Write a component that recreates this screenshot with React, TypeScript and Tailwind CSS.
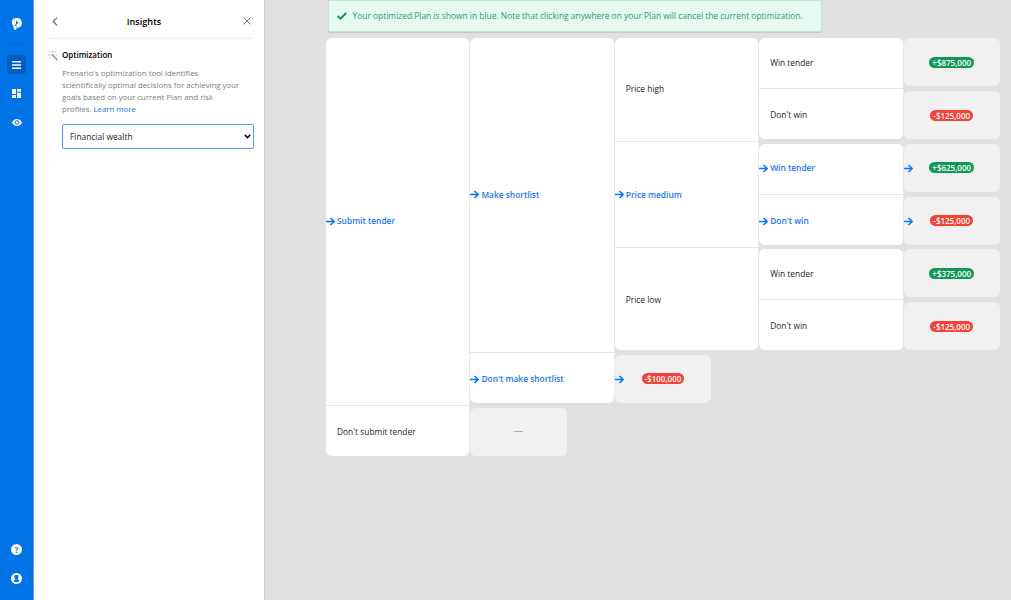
import React from "react";

type Cell = {
  label: string;
  active?: boolean;
  pos: string;
  first?: boolean;
  last?: boolean;
};

const cells: Cell[] = [
  { label: "Submit tender", active: true, pos: "col-start-1 row-start-1 row-span-7", first: true },
  { label: "Don't submit tender", pos: "col-start-1 row-start-8", last: true },
  { label: "Make shortlist", active: true, pos: "col-start-2 row-start-1 row-span-6", first: true },
  { label: "Don't make shortlist", active: true, pos: "col-start-2 row-start-7", last: true },
  { label: "Price high", pos: "col-start-3 row-start-1 row-span-2", first: true },
  { label: "Price medium", active: true, pos: "col-start-3 row-start-3 row-span-2" },
  { label: "Price low", pos: "col-start-3 row-start-5 row-span-2", last: true },
  { label: "Win tender", pos: "col-start-4 row-start-1", first: true },
  { label: "Don't win", pos: "col-start-4 row-start-2", last: true },
  { label: "Win tender", active: true, pos: "col-start-4 row-start-3", first: true },
  { label: "Don't win", active: true, pos: "col-start-4 row-start-4", last: true },
  { label: "Win tender", pos: "col-start-4 row-start-5", first: true },
  { label: "Don't win", pos: "col-start-4 row-start-6", last: true },
];

type Outcome = { value?: string; active?: boolean; pos: string };

const outcomes: Outcome[] = [
  { value: "+$875,000", pos: "col-start-5 row-start-1" },
  { value: "-$125,000", pos: "col-start-5 row-start-2" },
  { value: "+$625,000", active: true, pos: "col-start-5 row-start-3" },
  { value: "-$125,000", active: true, pos: "col-start-5 row-start-4" },
  { value: "+$375,000", pos: "col-start-5 row-start-5" },
  { value: "-$125,000", pos: "col-start-5 row-start-6" },
  { value: "-$100,000", active: true, pos: "col-start-3 row-start-7" },
  { pos: "col-start-2 row-start-8" },
];

function Arrow() {
  return (
    <svg viewBox="0 0 9 9" className="h-[9px] w-[9px] shrink-0" fill="none" stroke="#007bff" strokeWidth="1.6">
      <path d="M0 4.5H7.6M4.5 1 8 4.5 4.5 8" />
    </svg>
  );
}

function PlanCell({ label, active, pos, first, last }: Cell) {
  return (
    <div
      className={`${pos} flex flex-col border-r border-[#e8e8e8] bg-white ${first ? "rounded-t-[6px]" : ""} ${last ? "mb-[4.7px] rounded-b-[6px]" : ""}`}
    >
      <div className={`flex flex-1 items-center pt-[1.4px] ${active ? "font-semibold text-[#1677f5]" : "pl-[11px] text-[#212529]"}`}>
        {active && <span className="mr-[2px] flex"><Arrow /></span>}
        <span>{label}</span>
      </div>
      {!last && <div className="mb-[1.7px] mt-[2px] h-px bg-[#e6e6e6]" />}
    </div>
  );
}

function OutcomeCell({ value, active, pos }: Outcome) {
  return (
    <div className={`${pos} mb-[4.7px] grid w-[96.3px] grid-cols-[9px_1fr_9px] items-center rounded-[6px] bg-[#f1f1f1]`}>
      <div className="pt-px">{active && <Arrow />}</div>
      {value ? (
        <div
          className={`justify-self-center rounded-full px-[3px] text-[8px] leading-[11px] font-semibold text-white ${value.startsWith("+") ? "bg-[#109856]" : "bg-[#f44336]"}`}
        >
          {value}
        </div>
      ) : (
        <div className="h-px w-[9px] justify-self-center bg-[#b0b0b0]" />
      )}
    </div>
  );
}

function Sidebar() {
  return (
    <nav className="flex w-[34px] shrink-0 flex-col items-center border-r border-[#75aee9] bg-[#0073e6]">
      <svg viewBox="0 0 12 14" className="mt-[17px] h-[14px] w-[12px]">
        <path d="M3.8 1.3V12.800C2.800 12.400 2.500 11.300 2.500 9.400 1.200 8 .8 6.400 1 4.500 1.200 2.700 2.100 1.600 3.800 1.300Z" fill="white" />
        <path d="M3.700 1.300C8 .3 10.900 2.500 10.900 5.900 10.900 9 8.600 10.900 5.400 10.600V7.600L7.600 5.800 5 3.600V7.600H3.700Z" fill="white" />
        <path d="M3.700 9H5.400V12.800H3.700Z" fill="white" />
      </svg>
      <div className="mt-[13px] h-px w-[18px] bg-[#0068d2]" />
      <div className="mt-[10px] flex h-[19px] w-[19px] items-center justify-center rounded-[3px] bg-[#005fc4]">
        <svg viewBox="0 0 9 8" className="h-[8px] w-[9px]" fill="white">
          <path d="M0 0h9v1.5H0zM0 3.2h9v1.5H0zM0 6.4h9v1.5H0z" />
        </svg>
      </div>
      <svg viewBox="0 0 9 9" className="mt-[15px] h-[9px] w-[9px]" fill="white">
        <path d="M0 0h4v5H0zM5 0h4v2.8H5zM0 6h4v3H0zM5 3.8h4V9H5z" />
      </svg>
      <svg viewBox="0 0 10 7" className="mt-[20.5px] h-[7px] w-[10px]">
        <path d="M0 3.5C1 1.2 2.8 0 5 0s4 1.2 5 3.5C9 5.8 7.2 7 5 7S1 5.8 0 3.5Z" fill="white" />
        <circle cx="5" cy="3.5" r="1.9" fill="none" stroke="#0073e6" strokeWidth="1" />
      </svg>
      <div className="mt-auto flex h-[11px] w-[11px] items-center justify-center rounded-full bg-white text-[8px] leading-none font-bold text-[#0073e6]">
        ?
      </div>
      <svg viewBox="0 0 11 11" className="mt-[18px] mb-[16px] h-[11px] w-[11px]">
        <circle cx="5.5" cy="5.5" r="5.5" fill="white" />
        <path d="M5.5 1.8c1.4 0 2.1.9 2.1 2.1 0 1-.4 1.8-.9 2.2v.6l2.1.9c-.8 1.1-2 1.7-3.3 1.7S3 8.7 2.2 7.6l2.1-.9v-.6c-.5-.4-.9-1.2-.9-2.2 0-1.2.7-2.1 2.1-2.1Z" fill="#0073e6" />
      </svg>
    </nav>
  );
}

function Panel() {
  return (
    <aside className="flex w-[230px] shrink-0 flex-col bg-white pl-[14px] pr-[10px] shadow-[0_0_2px_rgba(0,0,0,0.25)]">
      <header className="grid h-[39px] grid-cols-[14px_1fr_28px] items-center border-b-[1.5px] border-[#ececec] pt-[5px] pl-[4px] pr-[3px]">
        <svg viewBox="0 0 6 9" className="h-[9px] w-[6px]" fill="none" stroke="#666" strokeWidth="1.2">
          <path d="M5 .7 1.2 4.5 5 8.3" />
        </svg>
        <h1 className="-ml-px text-center text-[9.1px] font-semibold text-black">Insights</h1>
        <svg viewBox="0 0 8 8" className="-mt-[2px] h-[8px] w-[8px] justify-self-end" fill="none" stroke="#777" strokeWidth="1">
          <path d="m.6.6 6.8 6.8M7.4.6.6 7.4" />
        </svg>
      </header>
      <section className="flex pt-[10px]">
        <svg viewBox="0 0 11 11" className="mt-px mr-[3px] h-[11px] w-[11px] shrink-0" fill="none" stroke="#a8a8a8" strokeWidth="1">
          <path d="m3.7 4.2 5.9 5.9" strokeWidth="2" />
          <path d="M4.7.6v1.500M1.400 1.200l1 1M.5 5h1.500M1.200 8.400l1-1M7.700 5h1.500M6.900 2.400l1.300-1.300" />
        </svg>
        <div className="flex-1">
          <h2 className="text-[8px] leading-[12px] font-semibold text-black">Optimization</h2>
          <p className="mt-[6px] text-[7.83px] leading-[12px] whitespace-nowrap text-[#7d7d7d]">
            Prenario's optimization tool identifies
            <br />
            scientifically optimal decisions for achieving your
            <br />
            goals based on your current Plan and risk
            <br />
            profiles. <a className="text-[#1677f5]">Learn more</a>
          </p>
          <div className="mt-[9px] flex h-[25px] items-center justify-between rounded-[2px] border border-[#4a9df5] pl-[7px] pr-[2px] text-[8.4px] text-[#212529]">
            <span className="pt-[2px]">Financial wealth</span>
            <svg viewBox="0 0 7 5" className="h-[5px] w-[7px]" fill="none" stroke="#111" strokeWidth="1.5">
              <path d="m.8.9 2.7 2.7L6.2.9" />
            </svg>
          </div>
        </div>
      </section>
    </aside>
  );
}

export default function App() {
  return (
    <div className="flex h-[600px] w-[1011px] overflow-hidden bg-[#e1e1e1] font-['Open_Sans','Noto_Sans',sans-serif]">
      <Sidebar />
      <Panel />
      <main className="flex-1 pl-[62px] text-[8.4px]">
        <div className="ml-[1.5px] flex h-[32px] w-[494.5px] items-center rounded-[2px] border border-[#c8e2d6] bg-[#e6faf2] pl-[8px] text-[8.41px] whitespace-nowrap text-[#329765] shadow-[0_1px_1px_rgba(0,0,0,0.12)]">
          <svg viewBox="0 0 10 8" className="mr-[6px] h-[8px] w-[10px]" fill="none" stroke="#109856" strokeWidth="2">
            <path d="m.8 4 2.7 2.7L9.2 1" />
          </svg>
          <span className="pt-px">
            Your optimized Plan is shown in blue. Note that clicking anywhere on your Plan will cancel the current optimization.
          </span>
        </div>
        <div className="mt-[6.3px] grid grid-cols-[repeat(4,144.4px)_96.4px] grid-rows-[repeat(8,52.75px)] whitespace-nowrap">
          {cells.map((c, i) => (
            <PlanCell key={i} {...c} />
          ))}
          {outcomes.map((o, i) => (
            <OutcomeCell key={i} {...o} />
          ))}
        </div>
      </main>
    </div>
  );
}
